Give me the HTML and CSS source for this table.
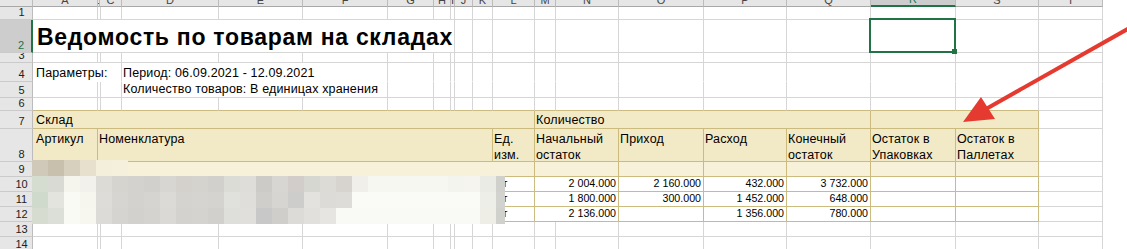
FILE: index.html
```html
<!DOCTYPE html>
<html lang="ru">
<head>
<meta charset="utf-8">
<link rel="stylesheet" href="styles.css">
</head>
<body>
<div class="page">
<div class="sheet">
<div class="corner"></div>
<div class="h">A</div><div class="h">B</div><div class="h">C</div><div class="h">D</div><div class="h">E</div><div class="h">F</div><div class="h">G</div><div class="h">H</div><div class="h">I</div><div class="h">J</div><div class="h">K</div><div class="h">L</div><div class="h">M</div><div class="h">N</div><div class="h">O</div><div class="h">P</div><div class="h">Q</div><div class="h sel">R</div><div class="h">S</div><div class="h">T</div>

<div class="rh">1</div>
<div class="c"></div><div class="c"></div><div class="c"></div><div class="c"></div><div class="c"></div><div class="c"></div><div class="c"></div><div class="c"></div><div class="c"></div><div class="c"></div><div class="c"></div><div class="c"></div><div class="c"></div><div class="c"></div><div class="c"></div><div class="c"></div><div class="c"></div><div class="c"></div><div class="c"></div><div class="c"></div>

<div class="rh rsel">2</div>
<div class="c s9 ttl">Ведомость по товарам на складах</div>
<div class="c"></div><div class="c"></div><div class="c"></div><div class="c"></div><div class="c"></div><div class="c"></div><div class="c"></div><div class="c"></div><div class="c"></div><div class="c"></div><div class="c"></div>

<div class="rh">3</div>
<div class="c"></div><div class="c"></div><div class="c"></div><div class="c"></div><div class="c"></div><div class="c"></div><div class="c"></div><div class="c"></div><div class="c"></div><div class="c"></div><div class="c"></div><div class="c"></div><div class="c"></div><div class="c"></div><div class="c"></div><div class="c"></div><div class="c"></div><div class="c"></div><div class="c"></div><div class="c"></div>

<div class="rh">4</div>
<div class="c nb s3 a">Параметры:</div>
<div class="c nb s3">Период: 06.09.2021 - 12.09.2021</div>
<div class="c nb"></div><div class="c nb"></div><div class="c nb"></div><div class="c nb"></div><div class="c nb"></div><div class="c nb"></div><div class="c nb"></div><div class="c nb"></div><div class="c nb"></div><div class="c nb"></div><div class="c nb"></div><div class="c nb"></div><div class="c nb"></div><div class="c nb"></div>

<div class="rh">5</div>
<div class="c"></div><div class="c"></div><div class="c"></div>
<div class="c s3">Количество товаров: В единицах хранения</div>
<div class="c"></div><div class="c"></div><div class="c"></div><div class="c"></div><div class="c"></div><div class="c"></div><div class="c"></div><div class="c"></div><div class="c"></div><div class="c"></div><div class="c"></div><div class="c"></div><div class="c"></div><div class="c"></div>

<div class="rh">6</div>
<div class="c tb"></div><div class="c tb"></div><div class="c tb"></div><div class="c tb"></div><div class="c tb"></div><div class="c tb"></div><div class="c tb"></div><div class="c tb"></div><div class="c tb"></div><div class="c tb"></div><div class="c tb"></div><div class="c tb"></div><div class="c tb"></div><div class="c tb"></div><div class="c tb"></div><div class="c tb"></div><div class="c tb"></div><div class="c tb"></div><div class="c tb"></div><div class="c"></div>

<div class="rh">7</div>
<div class="c hd s12 a">Склад</div>
<div class="c hd s5">Количество</div>
<div class="c hd s2"></div>
<div class="c"></div>

<div class="rh">8</div>
<div class="c hd wrap a"><span>Артикул</span></div>
<div class="c hd wrap s10"><span>Номенклатура</span></div>
<div class="c hd wrap"><span>Ед.<br>изм.</span></div>
<div class="c hd wrap s2"><span>Начальный<br>остаток</span></div>
<div class="c hd wrap"><span>Приход</span></div>
<div class="c hd wrap"><span>Расход</span></div>
<div class="c hd wrap"><span>Конечный<br>остаток</span></div>
<div class="c hd wrap"><span>Остаток в<br>Упаковках</span></div>
<div class="c hd wrap"><span>Остаток в<br>Паллетах</span></div>
<div class="c"></div>

<div class="rh">9</div>
<div class="c hl s12"></div><div class="c hl s2"></div><div class="c hl"></div><div class="c hl"></div><div class="c hl"></div><div class="c hl"></div><div class="c hl"></div><div class="c"></div>

<div class="rh">10</div>
<div class="c t s11"></div><div class="c t sm">шт</div><div class="c t s2 num">2 004.000</div><div class="c t num">2 160.000</div><div class="c t num">432.000</div><div class="c t num">3 732.000</div><div class="c t"></div><div class="c t"></div><div class="c"></div>

<div class="rh">11</div>
<div class="c t s11"></div><div class="c t sm">шт</div><div class="c t s2 num">1 800.000</div><div class="c t num">300.000</div><div class="c t num">1 452.000</div><div class="c t num">648.000</div><div class="c t"></div><div class="c t"></div><div class="c"></div>

<div class="rh">12</div>
<div class="c t s11"></div><div class="c t sm">шт</div><div class="c t s2 num">2 136.000</div><div class="c t num"></div><div class="c t num">1 356.000</div><div class="c t num">780.000</div><div class="c t"></div><div class="c t"></div><div class="c"></div>

<div class="rh">13</div>
<div class="c"></div><div class="c"></div><div class="c"></div><div class="c"></div><div class="c"></div><div class="c"></div><div class="c"></div><div class="c"></div><div class="c"></div><div class="c"></div><div class="c"></div><div class="c"></div><div class="c"></div><div class="c"></div><div class="c"></div><div class="c"></div><div class="c"></div><div class="c"></div><div class="c"></div><div class="c"></div>

<div class="rh">14</div>
<div class="c"></div><div class="c"></div><div class="c"></div><div class="c"></div><div class="c"></div><div class="c"></div><div class="c"></div><div class="c"></div><div class="c"></div><div class="c"></div><div class="c"></div><div class="c"></div><div class="c"></div><div class="c"></div><div class="c"></div><div class="c"></div><div class="c"></div><div class="c"></div><div class="c"></div><div class="c"></div>
</div>

<div class="blur"></div>
<div class="selbox"></div>
<div class="handle"></div>
<svg class="arrow" width="1127" height="249" viewBox="0 0 1127 249">
<line x1="1140" y1="22" x2="986" y2="109" stroke="#e53a2f" stroke-width="4"/>
<polygon points="963,122 981,97 995,119" fill="#e53a2f"/>
</svg>
</div>
</body>
</html>
```

FILE: styles.css
```css
html, body {
  margin: 0;
  padding: 0;
  background: #fff;
}
body {
  font-family: "Liberation Sans", Arial, sans-serif;
  font-size: 12.5px;
  color: #000;
}
.page {
  position: relative;
  width: 1127px;
  height: 249px;
  overflow: hidden;
}
.sheet {
  display: grid;
  grid-template-columns: 33px 65px 2px 22px 97px 84px 85px 46px 17px 4px 18px 20px 42px 21px 63px 85px 83px 84px 85px 83px 64px 1fr;
  grid-template-rows: 7px 13px 33px 10px 19px 16px 13px 18px 33px 15px 15px 15px 15px 15px 15px;
}
.corner, .h, .rh, .c {
  box-sizing: border-box;
  min-width: 0;
  display: flex;
  align-items: flex-end;
  white-space: nowrap;
}
.corner {
  grid-column: 1;
  background: #e6e6e6;
  border-right: 1px solid #bcbcbc;
  border-bottom: 1px solid #a8a8a8;
}
.h {
  background: #e6e6e6;
  border-right: 1px solid #bcbcbc;
  border-bottom: 1px solid #a8a8a8;
  justify-content: center;
  overflow: hidden;
  font-size: 11px;
  line-height: 12px;
  color: #444;
}
.h.sel {
  background: #cdcdcd;
  border-bottom: 2px solid #217346;
  color: #217346;
}
.rh {
  grid-column: 1;
  background: #e6e6e6;
  border-right: 1px solid #bcbcbc;
  border-bottom: 1px solid #cacaca;
  justify-content: center;
  padding-left: 11px;
  font-size: 11px;
  line-height: 13px;
  color: #222;
  overflow: hidden;
}
.rh.rsel {
  background: #cdcdcd;
  border-right: 2px solid #217346;
  color: #217346;
}
.c {
  border-right: 1px solid #d6d6d6;
  border-bottom: 1px solid #d6d6d6;
  line-height: 15px;
  padding: 0 1px;
  letter-spacing: 0.15px;
}
.s2 { grid-column: span 2; }
.s3 { grid-column: span 3; }
.s5 { grid-column: span 5; }
.s9 { grid-column: span 9; }
.s10 { grid-column: span 10; }
.s11 { grid-column: span 11; }
.s12 { grid-column: span 12; }
.a { padding-left: 3px; }
.nb { border-bottom-color: transparent; }
.tb { border-bottom-color: #cbbb7e; }
.t, .hd, .hl {
  border-right-color: #cbbb7e;
  border-bottom-color: #cbbb7e;
}
.hd { background: #f2e9c6; }
.hl { background: #f7f1da; }
.ttl {
  font-size: 23px;
  font-weight: bold;
  letter-spacing: 0.7px;
  line-height: 26px;
  padding-left: 4px;
  padding-bottom: 2px;
}
.wrap {
  align-items: flex-start;
  line-height: 16px;
  padding-top: 2px;
}
.num, .sm {
  font-size: 10.67px;
  letter-spacing: 0;
}
.num {
  justify-content: flex-end;
  padding-right: 2px;
}
.blur {
  position: absolute;
  left: 32px;
  top: 160px;
  width: 473px;
  height: 64px;
  background-repeat: no-repeat;
  background-size: 473px 16px;
  background-position: 0 0, 0 16px, 0 32px, 0 48px;
  background-image:
    linear-gradient(to right, #d0c8b8 0 16px, #c8c0ac 16px 32px, #d8d0be 32px 48px, #e6e0cc 48px 64px, #f4efda 64px 80px, #f5f0dc 80px 96px, transparent 96px 473px),
    linear-gradient(to right, #d5dcd0 0 16px, #dadad4 16px 32px, #f5f5ee 32px 48px, #f2f1eb 48px 64px, #dcdbd6 64px 80px, #d6d4cf 80px 96px, #d4d2ce 96px 112px, #d2d0cc 112px 128px, #d7d6d2 128px 144px, #d4d0cc 144px 160px, #d5d3ce 160px 176px, #d2d0cc 176px 192px, #dcdcd7 192px 208px, #deddd9 208px 224px, #cdcbc8 224px 240px, #d7d6d2 240px 256px, #d2cdca 256px 272px, #d7d7d2 272px 288px, #dcdbd6 288px 304px, #d7d4d0 304px 320px, #f0efea 320px 336px, #f7f7f2 336px 416px, #f4f4ee 416px 432px, #f5f4ee 432px 448px, #ebebe5 448px 464px, #d0d0cc 464px 473px),
    linear-gradient(to right, #cfd9cc 0 16px, #e4e4de 16px 32px, #fafaf4 32px 48px, #f6f6ef 48px 64px, #dddcd8 64px 80px, #d7d5d1 80px 96px, #d4d2ce 96px 112px, #d6d4d0 112px 128px, #dbdad6 128px 144px, #d5d3cf 144px 160px, #d6d4d0 160px 176px, #d5d3cf 176px 192px, #e0e0dc 192px 208px, #dfdeda 208px 224px, #cfcecb 224px 240px, #d6d5d1 240px 256px, #cdcdcb 256px 272px, #e3e2de 272px 288px, #dcdbd7 288px 304px, #dedcd8 304px 320px, #fafaf6 320px 448px, #eeeee8 448px 464px, #d2d2ce 464px 473px),
    linear-gradient(to right, #d6dccf 0 16px, #dcded8 16px 32px, #fafaf4 32px 48px, #f7f7f0 48px 64px, #dcdbd7 64px 80px, #d6d4d0 80px 96px, #d3d1cd 96px 112px, #d5d3cf 112px 128px, #dad9d5 128px 144px, #d4d2ce 144px 160px, #d5d3cf 160px 176px, #d2d0cc 176px 192px, #dededa 192px 208px, #e0dfdb 208px 224px, #c8c8c8 224px 240px, #d0ceca 240px 256px, #dcdbd8 256px 272px, #e1e0dc 272px 288px, #e6e5e1 288px 304px, #f9f9f5 304px 448px, #eeeee6 448px 464px, #d0d0cc 464px 473px);
}
.selbox {
  position: absolute;
  left: 869px;
  top: 18px;
  width: 87px;
  height: 35px;
  box-sizing: border-box;
  border: 2px solid #217346;
}
.handle {
  position: absolute;
  left: 952px;
  top: 49px;
  width: 5px;
  height: 5px;
  background: #217346;
}
.arrow {
  position: absolute;
  left: 0;
  top: 0;
  pointer-events: none;
}
```
